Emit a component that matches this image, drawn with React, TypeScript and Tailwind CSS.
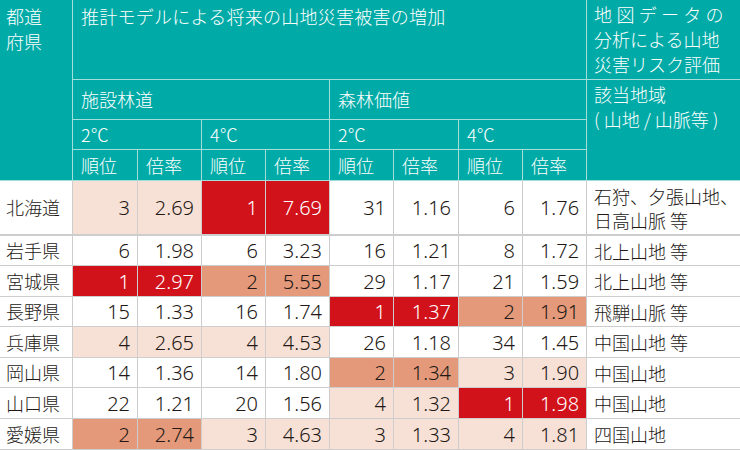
import React from "react";

type Tone = "w" | "p" | "s" | "r";
type Row = { pref: string; h: string; cells: [string, Tone][]; area: string[] };

const rows: Row[] = [
  {
    pref: "北海道",
    h: "h-[55px]",
    cells: [["3", "p"], ["2.69", "p"], ["1", "r"], ["7.69", "r"], ["31", "w"], ["1.16", "w"], ["6", "w"], ["1.76", "w"]],
    area: ["石狩、夕張山地、", "日高山脈 等"],
  },
  {
    pref: "岩手県",
    h: "h-[30px]",
    cells: [["6", "w"], ["1.98", "w"], ["6", "w"], ["3.23", "w"], ["16", "w"], ["1.21", "w"], ["8", "w"], ["1.72", "w"]],
    area: ["北上山地 等"],
  },
  {
    pref: "宮城県",
    h: "h-[31px]",
    cells: [["1", "r"], ["2.97", "r"], ["2", "s"], ["5.55", "s"], ["29", "w"], ["1.17", "w"], ["21", "w"], ["1.59", "w"]],
    area: ["北上山地 等"],
  },
  {
    pref: "長野県",
    h: "h-[30px]",
    cells: [["15", "w"], ["1.33", "w"], ["16", "w"], ["1.74", "w"], ["1", "r"], ["1.37", "r"], ["2", "s"], ["1.91", "s"]],
    area: ["飛騨山脈 等"],
  },
  {
    pref: "兵庫県",
    h: "h-[31px]",
    cells: [["4", "p"], ["2.65", "p"], ["4", "p"], ["4.53", "p"], ["26", "w"], ["1.18", "w"], ["34", "w"], ["1.45", "w"]],
    area: ["中国山地 等"],
  },
  {
    pref: "岡山県",
    h: "h-[30px]",
    cells: [["14", "w"], ["1.36", "w"], ["14", "w"], ["1.80", "w"], ["2", "s"], ["1.34", "s"], ["3", "p"], ["1.90", "p"]],
    area: ["中国山地"],
  },
  {
    pref: "山口県",
    h: "h-[31px]",
    cells: [["22", "w"], ["1.21", "w"], ["20", "w"], ["1.56", "w"], ["4", "p"], ["1.32", "p"], ["1", "r"], ["1.98", "r"]],
    area: ["中国山地"],
  },
  {
    pref: "愛媛県",
    h: "h-[31px]",
    cells: [["2", "s"], ["2.74", "s"], ["3", "p"], ["4.63", "p"], ["3", "p"], ["1.33", "p"], ["4", "p"], ["1.81", "p"]],
    area: ["四国山地"],
  },
];

const toneClass: Record<Tone, string> = {
  w: "bg-white text-[#231815]",
  p: "bg-[#f7e1d6] text-[#231815]",
  s: "bg-[#e49a7a] text-[#231815]",
  r: "bg-[#d1121b] text-white",
};

const hd = "bg-[#00aba7] text-white border-r border-b border-[#a3dedb] align-top";
const hdMid = "bg-[#00aba7] text-white border-r border-b border-[#a3dedb] align-middle pl-2";

export default function App() {
  return (
    <div className="w-[740px] h-[450px] overflow-hidden bg-white text-[18px] leading-[25px] font-light font-['Noto_Sans_CJK_JP','Noto_Sans',sans-serif]">
      <table className="table-fixed border-separate border-spacing-0 w-[740px]">
        <colgroup>
          <col className="w-[73px]" />
          <col className="w-[65px]" />
          <col className="w-[64px]" />
          <col className="w-[64px]" />
          <col className="w-[64px]" />
          <col className="w-[64px]" />
          <col className="w-[65px]" />
          <col className="w-[64px]" />
          <col className="w-[64px]" />
          <col className="w-[153px]" />
        </colgroup>
        <thead>
          <tr className="h-[80px]">
            <td rowSpan={4} className={`${hd} pl-[6px] pt-[4px]`}>
              <div>都道</div>
              <div>府県</div>
            </td>
            <td colSpan={8} className={`${hd} pl-2 pt-[4px] whitespace-nowrap tracking-[0.25px]`}>
              推計モデルによる将来の山地災害被害の増加
            </td>
            <td className="bg-[#00aba7] text-white border-b border-[#a3dedb] align-top pl-[7px] pt-[2px] whitespace-nowrap">
              <div className="tracking-[4.3px]">地図データの</div>
              <div>分析による山地</div>
              <div>災害リスク評価</div>
            </td>
          </tr>
          <tr className="h-[40px]">
            <td colSpan={4} className={hdMid}>施設林道</td>
            <td colSpan={4} className={hdMid}>森林価値</td>
            <td rowSpan={3} className="bg-[#00aba7] text-white border-b border-[#a3dedb] align-top pl-[7px] pt-[2px] whitespace-nowrap">
              <div>該当地域</div>
              <div>( 山地 / 山脈等 )</div>
            </td>
          </tr>
          <tr className="h-[30px]">
            <td colSpan={2} className={hdMid}>2℃</td>
            <td colSpan={2} className={hdMid}>4℃</td>
            <td colSpan={2} className={hdMid}>2℃</td>
            <td colSpan={2} className={hdMid}>4℃</td>
          </tr>
          <tr className="h-[31px]">
            {Array.from({ length: 4 }).map((_, i) => (
              <React.Fragment key={i}>
                <td className={hdMid}>順位</td>
                <td className={hdMid}>倍率</td>
              </React.Fragment>
            ))}
          </tr>
        </thead>
        <tbody>
          {rows.map((r, ri) => {
            const bb = ri === 0 ? "border-b-2" : "border-b";
            return (
              <tr key={r.pref} className={r.h}>
                <td className={`${bb} border-r border-[#cdcdcd] pl-[6px] text-[#231815] align-middle`}>{r.pref}</td>
                {r.cells.map(([v, t], ci) => (
                  <td
                    key={ci}
                    className={`${bb} border-r border-[#cdcdcd] pr-[7px] text-right align-middle text-[20px] leading-[25px] font-['Noto_Sans','Open_Sans',sans-serif] ${toneClass[t]}`}
                  >
                    {v}
                  </td>
                ))}
                <td className={`${bb} border-[#cdcdcd] pl-[7px] text-[#231815] align-middle leading-[24px]`}>
                  {r.area.map((a) => (
                    <div key={a} className="whitespace-nowrap">{a}</div>
                  ))}
                </td>
              </tr>
            );
          })}
        </tbody>
      </table>
    </div>
  );
}
